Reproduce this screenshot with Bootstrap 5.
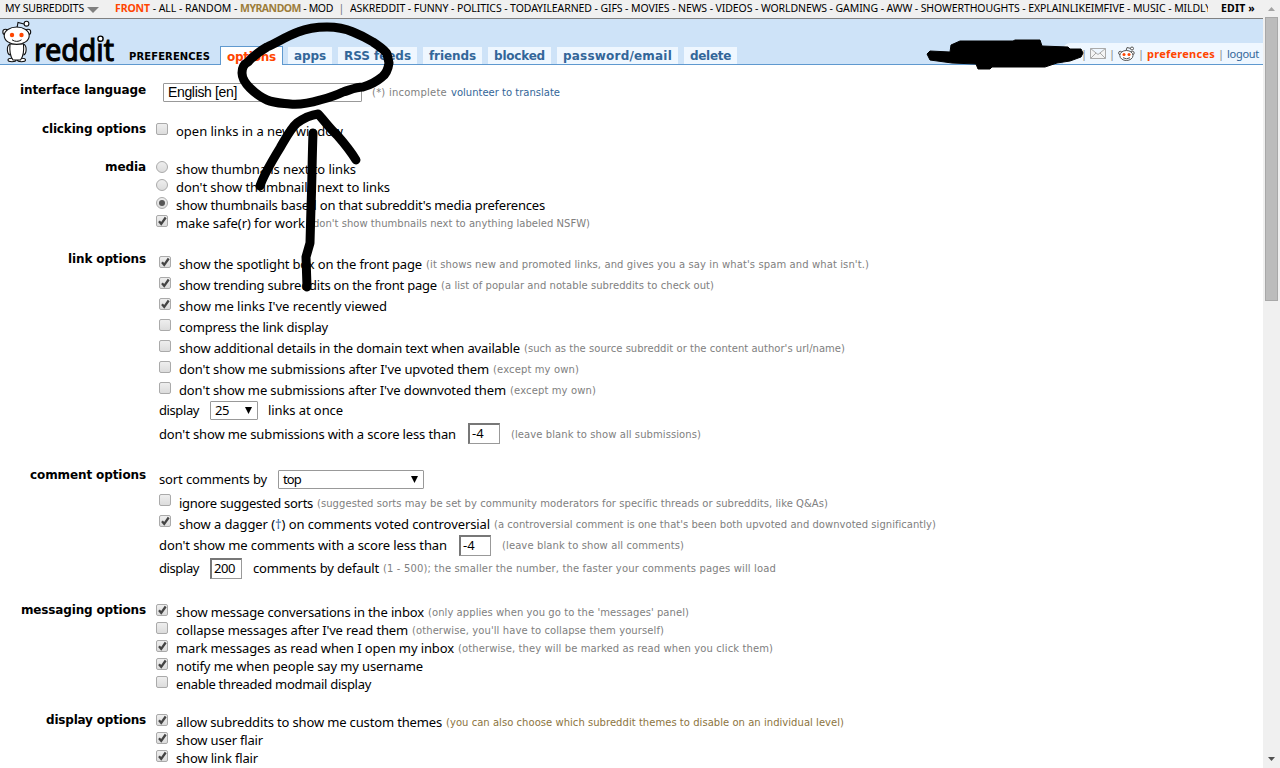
<!DOCTYPE html>
<html lang="en">
<head>
<meta charset="utf-8">
<title>reddit: preferences</title>
<link href="https://cdn.jsdelivr.net/npm/bootstrap@5.3.0/dist/css/bootstrap.min.css" rel="stylesheet">
<style>
html,body{height:768px;overflow:hidden}
body{font:13px/18px "Noto Sans",sans-serif;color:#000;background:#fff}
span{white-space:pre}
.page{width:1263px}
.topbar{height:19px;background:#f0f0f0;border-bottom:1px solid #808080;font-size:10.5px;line-height:17px;padding-left:5px}
.topbar b.front{color:#ff4500}
.topbar b.mine{color:#9d7d3a}
.subs{width:858px;overflow:hidden}
.caret{width:0;height:0;border:6px solid transparent;border-top-color:#808080;border-bottom:0;margin:2px 16px 0 3px}
.masthead{height:46px;background:#cee3f8;border-bottom:1px solid #5f99cf}
.pagename{font:bold 10px/14px "DejaVu Sans",sans-serif;width:91px}
.tabs{gap:6px}
.tab-item{height:17px;line-height:19px;padding:0 6px;background:#eff7ff;color:#369;font-weight:700;font-size:12px;font-family:"DejaVu Sans",sans-serif}
.tab-item.current{height:19px;line-height:20px;background:#fff;color:#ff4500;border:1px solid #5f99cf;border-bottom:0;margin-bottom:-1px;margin-right:-1px}
.userbox{height:21px;width:200px;background:#eff7ff;border-top-left-radius:7px;font-size:11px;color:#888}
.bar{width:12px;text-align:center;flex:none}
.section{width:1263px}
.title{width:146px;font:bold 12px/18px "DejaVu Sans",sans-serif;flex:none;text-align:right}
.s1{height:39px}.s2{height:38px}.s3{height:92px}.s4{height:216px}.s5{height:135px}.s6{height:110px}.s7{height:57px}
.opts{padding:2px 0 0 10px}
.opts.deep{padding:3px 0 0 13px}
.opts.mid{padding:2px 0 0 13px}
.r{height:18px;display:flex;align-items:center}
.deep .r{height:21px}
.deep .r19,.r.r19{height:20px}.deep .r27{height:27px}
.r.r22{height:22px}.r.r26{height:26px}.r.r16{height:16px}.r.r20{height:20px}
.hint{font-size:10px;font-family:"DejaVu Sans",sans-serif;color:#808080;margin-left:4px;padding-top:2px}
.hint.gold{color:#8c7440}
.bx{width:12px;height:12px;border:1px solid #aaa;border-radius:2px;background:linear-gradient(#eee,#dcdcdc);margin:0 8px 5px 0;flex:none;display:block}
.deep .bx{margin-bottom:4px}.mid .bx{margin-bottom:6px}
.bx.rd{border-radius:50%}
.bx svg{display:block;overflow:visible}
.sel{height:19px;border:1px solid #999;border-radius:1px;background:#fff;display:flex;align-items:center;justify-content:space-between;padding:0 5px 0 4px;flex:none}
.inp{height:21px;width:32px;border:2px solid #777;border-right:1px solid #999;border-bottom:1px solid #999;padding-left:2px;line-height:17px;flex:none}
.blue{color:#369}
.arial{font-family:"Liberation Sans",sans-serif;font-size:14px}
.scroller{position:absolute;right:0;top:0;width:17px;height:768px;background:#f0f0f0}
.ink{position:absolute;left:0;top:0;pointer-events:none}
</style>
</head>
<body>
<svg width="0" height="0" class="position-absolute"><defs>
<path id="ck" d="M2 5.3 4.2 7.8 8.7 1.5" fill="none" stroke="#444" stroke-width="2.3"/>
</defs></svg>
<div class="page">
<div class="topbar d-flex align-items-start">
<span data-w="79">MY SUBREDDITS</span><i class="caret align-self-center"></i>
<b class="front"><span data-w="35">FRONT</span></b><span data-w="90"> - ALL - RANDOM - </span><b class="mine"><span data-w="61">MYRANDOM</span></b><span data-w="32"> - MOD</span><span data-w="17" class="text-center text-secondary">  |  </span>
<div class="subs"><span data-w="861">ASKREDDIT - FUNNY - POLITICS - TODAYILEARNED - GIFS - MOVIES - NEWS - VIDEOS - WORLDNEWS - GAMING - AWW - SHOWERTHOUGHTS - EXPLAINLIKEIMFIVE - MUSIC - MILDLY</span></div>
<b class="ms-auto me-1 pe-1"><span data-w="34">EDIT »</span></b>
</div>
<header class="masthead d-flex align-items-end">
<svg width="129" height="45" viewBox="0 19 129 45" class="flex-shrink-0">
<g fill="#fff" stroke="#111" stroke-width="1.1">
<path d="M17 28 18 22.5 24 24" fill="none"/><circle cx="26.5" cy="23.7" r="2.4"/>
<circle cx="5.5" cy="32" r="2.7"/><circle cx="28" cy="32" r="2.7"/>
<ellipse cx="12" cy="60" rx="4" ry="1.7"/><ellipse cx="21.500" cy="60" rx="4" ry="1.7"/>
<path d="M10 44C6 46 7 54 10 55M23.500 44C27.500 46 26.500 54 23.500 55"/>
<path d="M10 44 Q9 55 13 60H20.500Q24.500 55 23.500 44Z"/>
<ellipse cx="16.700" cy="35.700" rx="12.500" ry="8.700"/></g>
<circle cx="12" cy="35" r="2.200" fill="#ff4500"/><circle cx="21.500" cy="35" r="2.200" fill="#ff4500"/>
<path d="M12 39.800Q16.700 43 21.500 39.800" fill="none" stroke="#111"/>
<text x="34" y="60.500" textLength="80" lengthAdjust="spacingAndGlyphs" font-family="Noto Sans" font-size="31" stroke="#000" stroke-width="1.1">reddit</text>
<circle cx="100.500" cy="38.700" r="2.600" fill="#fff" stroke="#000" stroke-width="1.400"/>
</svg>
<b class="pagename"><span data-w="81">PREFERENCES</span></b>
<nav class="tabs d-flex align-items-end">
<div class="tab-item current"><span data-w="49">options</span></div>
<div class="tab-item"><span data-w="32">apps</span></div>
<div class="tab-item"><span data-w="67">RSS feeds</span></div>
<div class="tab-item"><span data-w="47">friends</span></div>
<div class="tab-item"><span data-w="51">blocked</span></div>
<div class="tab-item"><span data-w="109">password/email</span></div>
<div class="tab-item"><span data-w="41">delete</span></div>
</nav>
<div class="userbox ms-auto d-flex align-items-center justify-content-end pe-1">
<span class="bar">|</span>
<svg width="16" height="12"><path d="M.5.500h15v10h-15zL8 6.500 15.500.500M.500 10.500 6 5M15.500 10.500 10 5" fill="#f4f4f4" stroke="#aaa"/></svg>
<span class="bar">|</span>
<svg width="17" height="16" viewBox="0 0 17 16"><g fill="#fff" stroke="#555"><path d="M8 5 9 1.500 13 2.500" fill="none"/><circle cx="14" cy="2.500" r="1.500"/><circle cx="2.300" cy="7" r="1.700"/><circle cx="14.500" cy="7" r="1.700"/><ellipse cx="8.400" cy="9.500" rx="6.600" ry="5"/><path d="M5 11.700Q8.500 14 12 11.700" fill="none"/></g><circle cx="6" cy="8.500" r="1.500" fill="#ff4500"/><circle cx="11" cy="8.500" r="1.500" fill="#ff4500"/></svg>
<span class="bar">|</span>
<b style="color:#ff4500"><span data-w="68">preferences</span></b><span class="bar">|</span><span class="blue" data-w="32">logout</span>
</div>
</header>
<main style="padding-top:16px">
<section class="section s1 d-flex"><div class="title"><span data-w="126">interface language</span></div>
<div style="padding:1px 0 0 17px"><div class="r r19"><div class="sel" style="width:199px"><span class="arial" data-w="69">English [en]</span></div><span class="hint" style="margin-left:10px" data-w="75">(*) incomplete</span><span class="hint blue" data-w="109">volunteer to translate</span></div></div></section>
<section class="section s2 d-flex"><div class="title"><span data-w="104">clicking options</span></div>
<div class="opts"><div class="r"><i class="bx"></i><span data-w="167">open links in a new window</span></div></div></section>
<section class="section s3 d-flex"><div class="title"><span data-w="41">media</span></div>
<div class="opts">
<div class="r"><i class="bx rd"></i><span data-w="180">show thumbnails next to links</span></div>
<div class="r"><i class="bx rd"></i><span data-w="214">don't show thumbnails next to links</span></div>
<div class="r"><i class="bx rd"><svg width="10" height="10"><circle cx="5" cy="5" r="3" fill="#555"/></svg></i><span data-w="369">show thumbnails based on that subreddit's media preferences</span></div>
<div class="r"><i class="bx"><svg width="10" height="10"><use href="#ck"/></svg></i><span data-w="129">make safe(r) for work</span><span class="hint" data-w="281">(don't show thumbnails next to anything labeled NSFW)</span></div>
</div></section>
<section class="section s4 d-flex"><div class="title"><span data-w="78">link options</span></div>
<div class="opts deep">
<div class="r"><i class="bx"><svg width="10" height="10"><use href="#ck"/></svg></i><span data-w="243">show the spotlight box on the front page</span><span class="hint" data-w="443">(it shows new and promoted links, and gives you a say in what's spam and what isn't.)</span></div>
<div class="r"><i class="bx"><svg width="10" height="10"><use href="#ck"/></svg></i><span data-w="258">show trending subreddits on the front page</span><span class="hint" data-w="273">(a list of popular and notable subreddits to check out)</span></div>
<div class="r"><i class="bx"><svg width="10" height="10"><use href="#ck"/></svg></i><span data-w="208">show me links I've recently viewed</span></div>
<div class="r"><i class="bx"></i><span data-w="149">compress the link display</span></div>
<div class="r"><i class="bx"></i><span data-w="341">show additional details in the domain text when available</span><span class="hint" data-w="321">(such as the source subreddit or the content author's url/name)</span></div>
<div class="r"><i class="bx"></i><span data-w="310">don't show me submissions after I've upvoted them</span><span class="hint" data-w="86">(except my own)</span></div>
<div class="r"><i class="bx"></i><span data-w="327">don't show me submissions after I've downvoted them</span><span class="hint" data-w="86">(except my own)</span></div>
<div class="r r19"><span data-w="40">display</span><div class="sel" style="width:48px;margin:0 10px 0 11px"><span data-w="14">25</span><svg width="7" height="7"><path d="M0 0h7L3.500 7z"/></svg></div><span data-w="75">links at once</span></div>
<div class="r r27"><span data-w="297">don't show me submissions with a score less than</span><div class="inp" style="margin:0 7px 0 12px">-4</div><span class="hint" data-w="190">(leave blank to show all submissions)</span></div>
</div></section>
<section class="section s5 d-flex"><div class="title"><span data-w="116">comment options</span></div>
<div class="opts mid">
<div class="r r22"><span data-w="108">sort comments by</span><div class="sel" style="width:146px;margin-left:11px"><span data-w="18">top</span><svg width="7" height="7"><path d="M0 0h7L3.500 7z"/></svg></div></div>
<div class="r r26"><i class="bx"></i><span data-w="134">ignore suggested sorts</span><span class="hint" data-w="511">(suggested sorts may be set by community moderators for specific threads or subreddits, like Q&amp;As)</span></div>
<div class="r r16"><i class="bx"><svg width="10" height="10"><use href="#ck"/></svg></i><span data-w="311">show a dagger (<span class="blue">†</span>) on comments voted controversial</span><span class="hint" data-w="442">(a controversial comment is one that's been both upvoted and downvoted significantly)</span></div>
<div class="r r26"><span data-w="288">don't show me comments with a score less than</span><div class="inp" style="margin:0 7px 0 12px">-4</div><span class="hint" data-w="182">(leave blank to show all comments)</span></div>
<div class="r r20"><span data-w="40">display</span><div class="inp" style="margin:0 11px"><span data-w="21">200</span></div><span data-w="126">comments by default</span><span class="hint" data-w="393">(1 - 500); the smaller the number, the faster your comments pages will load</span></div>
</div></section>
<section class="section s6 d-flex"><div class="title"><span data-w="125">messaging options</span></div>
<div class="opts">
<div class="r"><i class="bx"><svg width="10" height="10"><use href="#ck"/></svg></i><span data-w="248">show message conversations in the inbox</span><span class="hint" data-w="261">(only applies when you go to the 'messages' panel)</span></div>
<div class="r"><i class="bx"></i><span data-w="232">collapse messages after I've read them</span><span class="hint" data-w="252">(otherwise, you'll have to collapse them yourself)</span></div>
<div class="r"><i class="bx"><svg width="10" height="10"><use href="#ck"/></svg></i><span data-w="278">mark messages as read when I open my inbox</span><span class="hint" data-w="315">(otherwise, they will be marked as read when you click them)</span></div>
<div class="r"><i class="bx"><svg width="10" height="10"><use href="#ck"/></svg></i><span data-w="247">notify me when people say my username</span></div>
<div class="r"><i class="bx"></i><span data-w="195">enable threaded modmail display</span></div>
</div></section>
<section class="section s7 d-flex"><div class="title"><span data-w="100">display options</span></div>
<div class="opts">
<div class="r"><i class="bx"><svg width="10" height="10"><use href="#ck"/></svg></i><span data-w="266">allow subreddits to show me custom themes</span><span class="hint gold" data-w="398">(you can also choose which subreddit themes to disable on an individual level)</span></div>
<div class="r"><i class="bx"><svg width="10" height="10"><use href="#ck"/></svg></i><span data-w="87">show user flair</span></div>
<div class="r"><i class="bx"><svg width="10" height="10"><use href="#ck"/></svg></i><span data-w="82">show link flair</span></div>
</div></section>
</main>
</div>
<svg class="scroller" width="17" height="768"><path d="M5 11h7L8.500 7z" fill="#a3a3a3"/><rect x="2.500" y="17.500" width="12" height="283" fill="#bcbcbc" stroke="#a8a8a8"/><path d="M5 757h7l-3.500 4z" fill="#505050"/></svg>
<svg class="ink" width="1280" height="768">
<g fill="none" stroke="#000" stroke-width="9" stroke-linecap="round" stroke-linejoin="round">
<path d="M298 32C308 28 318 27 327 27 337 27 346 29 353 32 363 36 368 39 373 42 380 47 385 50 387 54L389 63C388 70 386 74 382 77 376 82 370 85 363 87 356 87 350 90 343 92 335 96 328 98 320 100 310 103 300 105 290 104 281 103 274 103 267 100 260 97 255 93 250 88 245 83 242 78 242 73 242 67 244 64 248 62 254 55 260 51 267 47 278 42 287 36 298 32Z"/>
<path d="M260 186C264 174 272 161 280 148 287 136 291 128 297 123 304 118 310 115 318 114 324 120 329 128 337 135 344 143 350 150 356 160"/>
<path d="M313 133C312 160 312 184 311 207L310 243 306 257 307 287"/></g>
<path d="M927 54 930 51 950 52 951 45 960 41H1013L1015 40H1040L1042 46 1068 47 1070 49H1081L1083 53 1081 57 1070 61 1057 63 1045 67H1012L992 67 990 69H978L976 64 952 63 930 60Z" stroke="#000" stroke-linejoin="round"/>
</svg>
<script>
// spread each label's letters so that it fills its measure
document.querySelectorAll('[data-w]').forEach(function(e){
  e.style.letterSpacing='0';
  var n=Array.from(e.textContent).length, w=e.getBoundingClientRect().width;
  e.style.letterSpacing=((+e.dataset.w-w)/n)+'px';
  e.style.flex='none';
});
</script>
<script src="https://cdn.jsdelivr.net/npm/bootstrap@5.3.0/dist/js/bootstrap.bundle.min.js"></script>
</body>
</html>
